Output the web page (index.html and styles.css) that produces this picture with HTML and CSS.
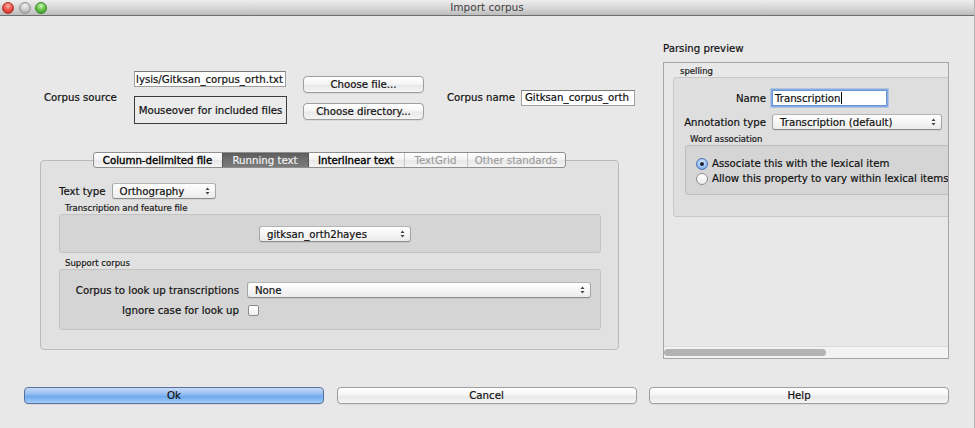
FILE: index.html
```html
<!DOCTYPE html>
<html>
<head>
<meta charset="utf-8">
<title>Import corpus</title>
<link rel="stylesheet" href="styles.css">
</head>
<body>
<div class="window">
  <div class="titlebar">
    <div class="lights"><span class="light red"></span><span class="light grey"></span><span class="light green"></span></div>
    <div class="title">Import corpus</div>
    <div></div>
  </div>
  <div class="content">
    <div class="left">
      <div class="source-row">
        <div class="lbl source-lbl">Corpus source</div>
        <div class="source-boxes">
          <div class="field path"><span>lysis/Gitksan_corpus_orth.txt</span></div>
          <div class="mouseover">Mouseover for included files</div>
        </div>
        <div class="choose">
          <div class="btn">Choose file...</div>
          <div class="btn">Choose directory...</div>
        </div>
        <div class="lbl name-lbl">Corpus name</div>
        <div class="field corpus-name">Gitksan_corpus_orth</div>
      </div>
      <div class="tabwidget">
        <div class="tabbar">
          <div class="tab t1">Column-delimited file</div>
          <div class="tab t2 selected">Running text</div>
          <div class="tab t3">Interlinear text</div>
          <div class="tab t4 disabled">TextGrid</div>
          <div class="tab t5 disabled">Other standards</div>
        </div>
        <div class="tabpanel">
          <div class="texttype">
            <span class="lbl">Text type</span>
            <div class="combo ortho"><span>Orthography</span><svg class="arr" width="5" height="8" viewBox="0 0 5 8"><path d="M2.5 0.5 L4.5 3 L0.5 3 Z M0.5 5 L4.5 5 L2.5 7.5 Z" fill="#444"/></svg></div>
          </div>
          <div class="group-title">Transcription and feature file</div>
          <div class="group feature">
            <div class="combo gitksan"><span>gitksan_orth2hayes</span><svg class="arr" width="5" height="8" viewBox="0 0 5 8"><path d="M2.5 0.5 L4.5 3 L0.5 3 Z M0.5 5 L4.5 5 L2.5 7.5 Z" fill="#444"/></svg></div>
          </div>
          <div class="group-title support-title">Support corpus</div>
          <div class="group support">
            <span class="lbl r">Corpus to look up transcriptions</span>
            <div class="combo none"><span>None</span><svg class="arr" width="5" height="8" viewBox="0 0 5 8"><path d="M2.5 0.5 L4.5 3 L0.5 3 Z M0.5 5 L4.5 5 L2.5 7.5 Z" fill="#444"/></svg></div>
            <span class="lbl r">Ignore case for look up</span>
            <span class="check"></span>
          </div>
        </div>
      </div>
    </div>
    <div class="right">
      <div class="lbl preview-title">Parsing preview</div>
      <div class="preview">
        <div class="preview-scroll">
          <div class="group-title spell-title">spelling</div>
          <div class="group spelling">
            <div class="form">
              <span class="lbl r">Name</span>
              <div class="field namefield"><span>Transcription</span><span class="caret"></span></div>
              <span class="lbl r">Annotation type</span>
              <div class="combo anno"><span>Transcription (default)</span><svg class="arr" width="5" height="8" viewBox="0 0 5 8"><path d="M2.5 0.5 L4.5 3 L0.5 3 Z M0.5 5 L4.5 5 L2.5 7.5 Z" fill="#444"/></svg></div>
            </div>
            <div class="group-title assoc-title">Word association</div>
            <div class="group assoc">
              <div class="radio-row"><span class="radio on"></span><span>Associate this with the lexical item</span></div>
              <div class="radio-row"><span class="radio"></span><span>Allow this property to vary within lexical items</span></div>
            </div>
          </div>
        </div>
        <div class="hscroll"><div class="thumb"></div></div>
      </div>
    </div>
  </div>
  <div class="buttons">
    <div class="btn primary">Ok</div>
    <div class="btn">Cancel</div>
    <div class="btn">Help</div>
  </div>
</div>
</body>
</html>
```

FILE: styles.css
```css
* { box-sizing: border-box; }
html, body { margin: 0; padding: 0; }
body {
  width: 975px;
  height: 428px;
  overflow: hidden;
  background: #e8e8e8;
  font-family: "DejaVu Sans", "Liberation Sans", sans-serif;
  font-size: 10.2px;
  color: #111;
  -webkit-text-stroke: 0.2px currentColor;
}
.window {
  width: 975px;
  height: 428px;
  background: #e8e8e8;
  border-right: 1px solid #b4b4b4;
}

/* title bar */
.titlebar {
  height: 16px;
  display: grid;
  grid-template-columns: 1fr auto 1fr;
  align-items: center;
  background: linear-gradient(#ededed, #d6d6d6 55%, #bcbcbc);
  border-bottom: 1px solid #6e6e6e;
}
.lights { display: flex; gap: 4.5px; padding-left: 2px; }
.light {
  width: 12px; height: 12px; border-radius: 50%;
  display: block;
}
.light.red {
  background: radial-gradient(circle at 50% 30%, #ffb0a8 0, #f0574e 45%, #b8261e 100%);
  border: 1px solid #a8342c;
}
.light.grey {
  background: radial-gradient(circle at 50% 30%, #f2f2f2 0, #c8c8c8 50%, #9c9c9c 100%);
  border: 1px solid #949494;
}
.light.green {
  background: radial-gradient(circle at 50% 30%, #d4f5b8 0, #6cc650 45%, #2c8a1c 100%);
  border: 1px solid #3a8a2c;
}
.title { font-size: 10.5px; color: #3f3f3f; line-height: 15px; -webkit-text-stroke: 0; }

/* layout */
.content { display: flex; height: 343px; }
.left { width: 650px; padding-top: 55px; display: flex; flex-direction: column; }
.right { padding-left: 13px; padding-top: 26px; display: flex; flex-direction: column; }

.lbl { white-space: nowrap; }
.lbl.r { justify-self: end; }

/* source row */
.source-row { display: flex; align-items: center; padding-left: 44px; }
.source-lbl { width: 90px; }
.source-boxes { display: flex; flex-direction: column; gap: 9px; width: 153px; }
.field {
  height: 16px;
  background: #fff;
  border: 1px solid #a0a0a0;
  border-top-color: #7c7c7c;
  display: flex;
  align-items: center;
  padding: 0 2px;
  white-space: nowrap;
  overflow: hidden;
}
.path { width: 152px; justify-content: flex-end; }
.mouseover {
  height: 28px;
  border: 1px solid #3c3c3c;
  display: flex; align-items: center; justify-content: center;
  white-space: nowrap;
  background: #ebebeb;
}
.choose { margin-left: 16px; width: 121px; display: flex; flex-direction: column; gap: 10px; }
.name-lbl { margin-left: 23px; }
.corpus-name { margin-left: 6px; width: 114px; padding-left: 3px; }

/* buttons */
.btn {
  height: 17px;
  border: 1px solid #9e9e9e;
  border-radius: 4px;
  background: linear-gradient(#ffffff, #f6f6f6 45%, #e9e9e9 55%, #f4f4f4);
  display: flex; align-items: center; justify-content: center;
  color: #111;
  white-space: nowrap;
  box-shadow: 0 1px 0 rgba(0,0,0,0.06);
}
.btn.primary {
  background: linear-gradient(#c6dcf8, #8fbaf0 45%, #6ea8ee 55%, #a2cdf8);
  border-color: #5a6ea0;
}

/* tab widget */
.tabwidget { margin-left: 40px; margin-top: 28px; width: 579px; display: flex; flex-direction: column; }
.tabbar {
  position: relative; z-index: 2;
  align-self: center;
  display: flex;
  height: 16px;
  margin-bottom: -8px;
  margin-right: 1px;
  border: 1px solid #8f8f8f;
  border-radius: 3px;
  background: linear-gradient(#ffffff, #f2f2f2 50%, #e8e8e8 51%, #f4f4f4);
  overflow: hidden;
}
.tab {
  display: flex; align-items: center; justify-content: center;
  white-space: nowrap;
  border-left: 1px solid #c4c4c4;
  color: #000;
  -webkit-text-stroke: 0.35px currentColor;
}
.tab:first-child { border-left: none; }
.t1 { width: 128px; }
.t2 { width: 86px; }
.t3 { width: 96px; }
.t4 { width: 63px; }
.t5 { width: 98px; }
.tab.selected {
  background: linear-gradient(#5c5c5c, #707070 50%, #7c7c7c);
  color: #f4f4f4;
  border-left-color: #555;
  -webkit-text-stroke: 0.15px currentColor;
}
.tab.selected + .tab { border-left-color: #555; }
.tab.disabled { color: #9a9a9a; -webkit-text-stroke: 0.1px currentColor; }

.tabpanel {
  border: 1px solid #bababa;
  border-radius: 4px;
  background: #e1e1e1;
  padding: 22px 17px 19px 18px;
  display: flex; flex-direction: column;
}
.texttype { display: flex; align-items: center; gap: 6px; height: 16px; }

.combo {
  height: 16px;
  border: 1px solid #a4a4a4;
  border-top-color: #b4b4b4;
  border-bottom-color: #8c8c8c;
  border-radius: 3px;
  background: linear-gradient(#ffffff, #f3f3f3 60%, #ececec);
  display: flex; align-items: center; justify-content: space-between;
  padding: 0 5px 0 7px;
  white-space: nowrap;
  color: #111;
  box-shadow: 0 1px 0 rgba(0,0,0,0.06);
}
.arr { flex: none; }
.ortho { width: 104px; }
.gitksan { width: 152px; }
.none { width: 344px; }
.anno { width: 170px; }

.group-title {
  font-size: 8.5px;
  line-height: 12px;
  padding-left: 6px;
  white-space: nowrap;
  color: #1a1a1a;
}
.texttype + .group-title { margin-top: 3px; }
.support-title { margin-top: 4px; }
.group {
  border: 1px solid #c3c3c3;
  border-radius: 3px;
  background: #d5d5d5;
}
.feature {
  height: 39px;
  display: flex; align-items: center; justify-content: center;
  padding-left: 10px;
  padding-top: 1px;
}
.support {
  display: grid;
  grid-template-columns: 179px 344px;
  grid-template-rows: 16px 14px;
  column-gap: 8px;
  row-gap: 5px;
  align-items: center;
  padding: 12px 0 12px 0;
}
.check {
  width: 11px; height: 11px;
  border: 1px solid #8c8c8c;
  border-radius: 2px;
  background: linear-gradient(#ffffff, #f0f0f0);
  margin-left: 1px;
}

/* preview */
.preview-title { line-height: 14px; margin-bottom: 6px; }
.preview {
  width: 286px;
  height: 297px;
  border: 1px solid #a6a6a6;
  background: #e8e8e8;
  display: flex; flex-direction: column;
}
.preview-scroll {
  flex: 1;
  overflow: hidden;
  padding-left: 9px;
  padding-top: 3px;
}
.spell-title { line-height: 11px; padding-left: 7px; }
.spelling {
  width: 340px;
  background: #dedede;
  border-color: #c8c8c8;
  padding: 12px 0 21px 0;
}
.form {
  display: grid;
  grid-template-columns: 81px 170px;
  grid-template-rows: 16px 16px;
  column-gap: 6px;
  row-gap: 8px;
  align-items: center;
  padding-left: 11px;
}
.namefield {
  width: 115px;
  border: 1px solid #6a94d6;
  box-shadow: 0 0 0 1.5px rgba(104, 154, 226, 0.75);
  padding-left: 2px;
}
.caret { width: 1px; height: 12px; background: #000; margin-left: 0; }
.assoc-title { margin-top: 3px; padding-left: 16px; }
.assoc {
  margin-left: 11px;
  width: 320px;
  background: #d5d5d5;
  border-color: #bdbdbd;
  padding: 10px 0 8px 10px;
}
.radio-row { display: flex; align-items: center; gap: 4px; height: 15px; white-space: nowrap; }
.radio {
  width: 12px; height: 12px; border-radius: 50%;
  border: 1px solid #8e8e8e;
  background: linear-gradient(#ffffff, #ececec);
  flex: none;
  display: flex; align-items: center; justify-content: center;
}
.radio.on {
  border-color: #4f74b0;
  background: radial-gradient(circle at 50% 35%, #e2eefc 0, #9cc2f2 55%, #5d93dc 100%);
}
.radio.on::after {
  content: "";
  width: 4px; height: 4px; border-radius: 50%;
  background: #1b2536;
}
.hscroll {
  height: 12px;
  background: #f3f3f3;
  border-top: 1px solid #dadada;
  display: flex; align-items: center;
}
.thumb {
  width: 162px; height: 7px;
  border-radius: 4px;
  background: #b3b3b3;
  margin-left: 0;
}

/* bottom */
.buttons {
  display: flex;
  gap: 12.5px;
  margin-top: 28px;
  padding-left: 24px;
}
.buttons .btn { width: 300px; }
```
